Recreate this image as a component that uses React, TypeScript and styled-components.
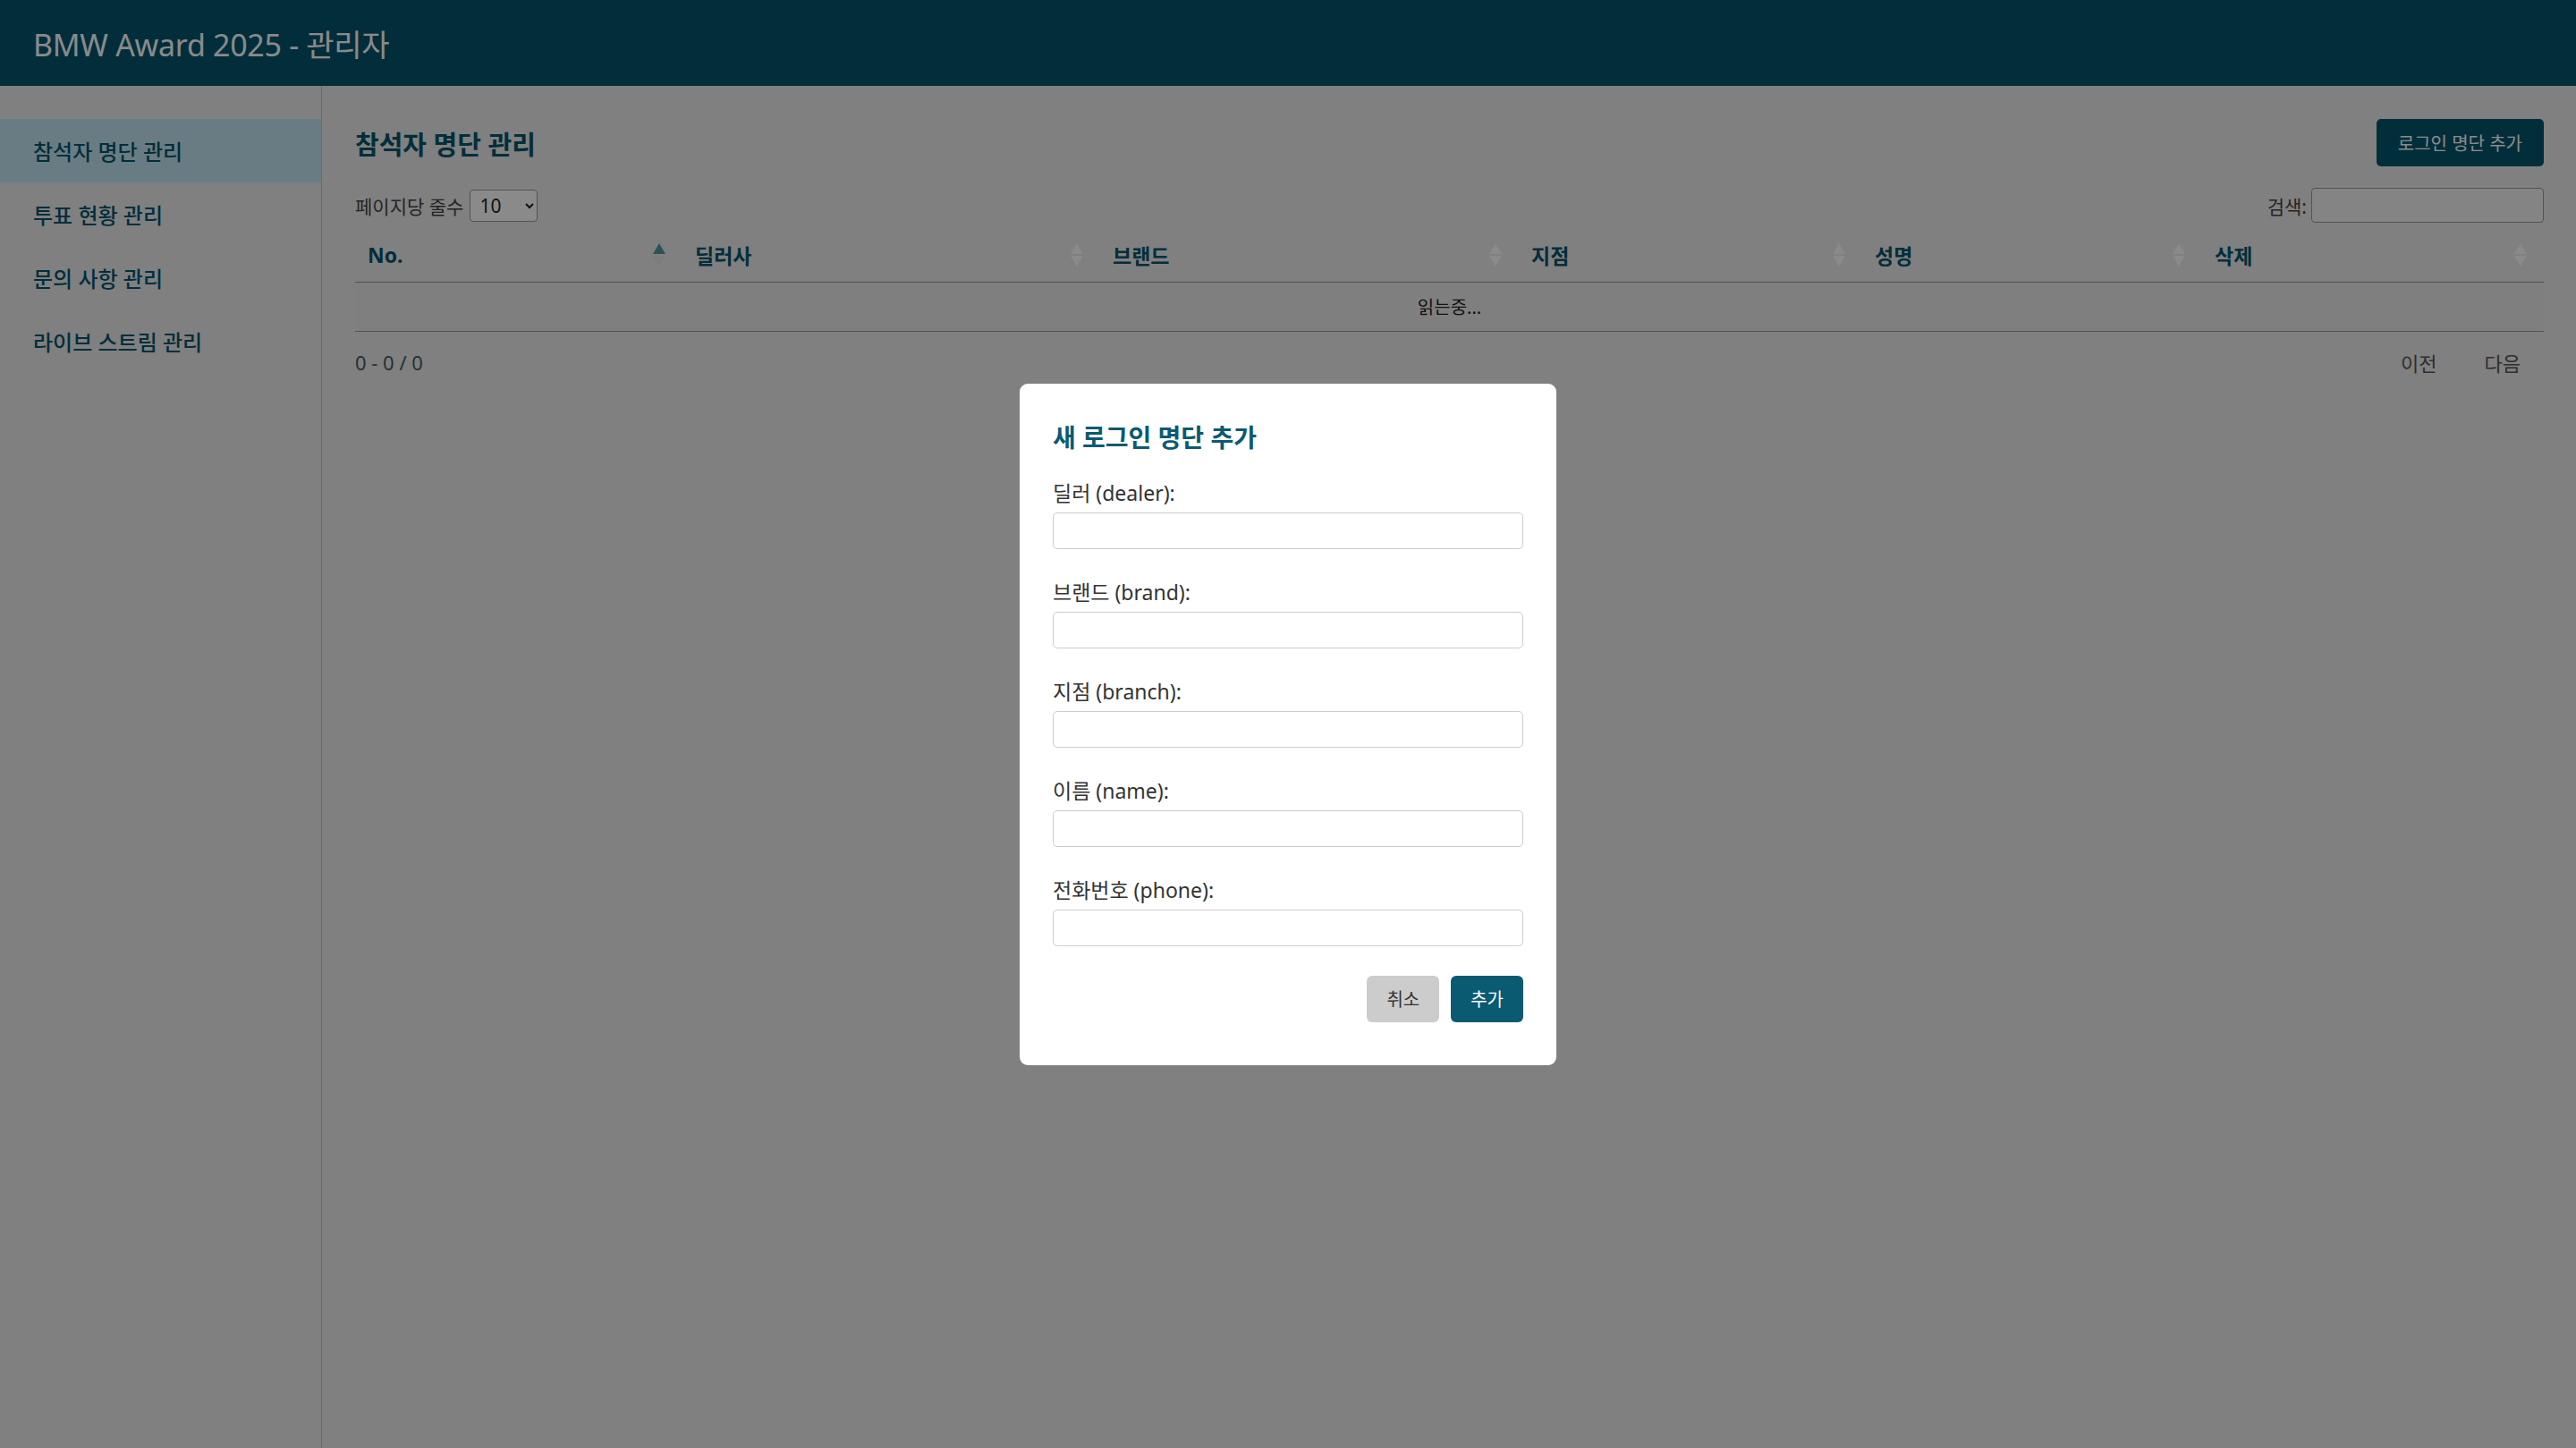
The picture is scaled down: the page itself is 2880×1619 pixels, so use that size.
import { FC } from "react";
import styled, { createGlobalStyle } from "styled-components";

const primary = "#04566e";

const GlobalStyle = createGlobalStyle`
  html, body {
    margin: 0;
    padding: 0;
  }
  body {
    font-family: "Noto Sans", "Noto Sans CJK KR", sans-serif;
    background: #ececec;
    color: #333;
  }
  * {
    box-sizing: border-box;
  }
`;

const Page = styled.div`
  min-height: 100vh;
  display: flex;
  flex-direction: column;
  background: #ececec;
`;

const TopBar = styled.header`
  height: 96px;
  flex-shrink: 0;
  background: ${primary};
  display: flex;
  align-items: center;
  padding: 0 37px;

  h1 {
    margin: 0;
    font-size: 34px;
    font-weight: 400;
    color: #fff;
    letter-spacing: -0.3px;
  }
`;

const Body = styled.div`
  flex: 1;
  display: flex;
`;

const Sidebar = styled.nav`
  width: 360px;
  flex-shrink: 0;
  border-right: 1px solid #c4c4c4;
  padding-top: 37px;
`;

const NavItem = styled.div<{ $active?: boolean }>`
  height: 71px;
  display: flex;
  align-items: center;
  padding: 0 37px;
  font-size: 24px;
  font-weight: 500;
  color: ${primary};
  background: ${(p) => (p.$active ? "#c4e6f2" : "transparent")};
`;

const Main = styled.main`
  flex: 1;
  padding: 37px 36px 0 37px;
`;

const TitleRow = styled.div`
  height: 53px;
  display: flex;
  justify-content: space-between;
  align-items: center;

  h2 {
    margin: 0;
    font-size: 29px;
    font-weight: 700;
    color: ${primary};
  }
`;

const PrimaryButton = styled.button`
  height: 53px;
  padding: 0 24px;
  border: none;
  border-radius: 5px;
  background: ${primary};
  color: #fff;
  font-family: inherit;
  font-size: 20px;
`;

const ControlsRow = styled.div`
  margin-top: 24px;
  height: 39px;
  display: flex;
  justify-content: space-between;
  align-items: center;
  font-size: 21px;
  color: #444;

  label {
    display: flex;
    align-items: center;
    gap: 7px;
  }
`;

const PageSelect = styled.select`
  width: 76px;
  height: 36px;
  font-family: inherit;
  font-size: 21px;
  color: #222;
  background: #fff;
  border: 1px solid #999;
  border-radius: 4px;
  padding: 0 6px;
`;

const SearchInput = styled.input`
  width: 260px;
  height: 39px;
  border: 1px solid #999;
  border-radius: 4px;
  background: #f4f4f4;
`;

const Table = styled.table`
  margin-top: 6px;
  width: 100%;
  border-collapse: collapse;
  table-layout: fixed;
`;

const Th = styled.th`
  height: 60px;
  padding: 0 19px 0 14px;
  border-bottom: 1px solid #9a9a9a;
  text-align: left;
  font-size: 23px;
  font-weight: 700;
  color: ${primary};

  div {
    display: flex;
    justify-content: space-between;
    align-items: center;
  }
`;

const LoadingCell = styled.td`
  height: 55px;
  text-align: center;
  font-size: 20px;
  color: #222;
  background: #eaeaea;
  border-bottom: 1px solid #9a9a9a;
`;

const Footer = styled.div`
  margin-top: 16px;
  height: 36px;
  display: flex;
  justify-content: space-between;
  align-items: center;
  font-size: 22px;
  color: #3f5d66;
`;

const Pager = styled.div`
  display: flex;
  gap: 1px;
`;

const PageLink = styled.span`
  padding: 0 26px;
  color: #555;
  font-size: 22px;
`;

const Overlay = styled.div`
  position: fixed;
  inset: 0;
  background: rgba(0, 0, 0, 0.46);
  display: flex;
  align-items: center;
  justify-content: center;
`;

const Modal = styled.div`
  width: 600px;
  background: #fff;
  border-radius: 9px;
  padding: 42px 37px 48px;

  h3 {
    margin: 0 0 29px;
    font-size: 28px;
    line-height: 36px;
    font-weight: 700;
    color: #0a5a72;
  }
`;

const Field = styled.div`
  margin-bottom: 33px;

  label {
    display: block;
    font-size: 23px;
    line-height: 30px;
    color: #333;
    margin-bottom: 7px;
  }

  input {
    display: block;
    width: 100%;
    height: 41px;
    border: 1px solid #ccc;
    border-radius: 5px;
    background: #fff;
  }
`;

const Actions = styled.div`
  display: flex;
  justify-content: flex-end;
  gap: 13px;
`;

const ModalButton = styled.button<{ $primary?: boolean }>`
  height: 52px;
  padding: 0 22px;
  border: none;
  border-radius: 6px;
  font-family: inherit;
  font-size: 20px;
  background: ${(p) => (p.$primary ? "#0a5a72" : "#cccccc")};
  color: ${(p) => (p.$primary ? "#fff" : "#333")};
`;

const SortIcon: FC<{ active?: boolean }> = ({ active }) => (
  <svg width="14" height="28" viewBox="0 0 14 28">
    <path d="M7 1 L14 13 H0 Z" fill={active ? "#4f9c9a" : "#ffffff"} />
    <path d="M0 15 H14 L7 27 Z" fill={active ? "#e2e8e8" : "#ffffff"} />
  </svg>
);

const columns = [
  { label: "No.", width: 366 },
  { label: "딜러사", width: 467 },
  { label: "브랜드", width: 468 },
  { label: "지점", width: 384 },
  { label: "성명", width: 380 },
  { label: "삭제", width: 382 },
];

const navItems = ["참석자 명단 관리", "투표 현황 관리", "문의 사항 관리", "라이브 스트림 관리"];

const fields = [
  "딜러 (dealer):",
  "브랜드 (brand):",
  "지점 (branch):",
  "이름 (name):",
  "전화번호 (phone):",
];

const App: FC = () => {
  return (
    <>
      <GlobalStyle />
      <Page>
        <TopBar>
          <h1>BMW Award 2025 - 관리자</h1>
        </TopBar>
        <Body>
          <Sidebar>
            {navItems.map((item, i) => (
              <NavItem key={item} $active={i === 0}>
                {item}
              </NavItem>
            ))}
          </Sidebar>
          <Main>
            <TitleRow>
              <h2>참석자 명단 관리</h2>
              <PrimaryButton>로그인 명단 추가</PrimaryButton>
            </TitleRow>
            <ControlsRow>
              <label>
                페이지당 줄수
                <PageSelect defaultValue="10">
                  <option value="10">10</option>
                  <option value="25">25</option>
                  <option value="50">50</option>
                </PageSelect>
              </label>
              <label style={{ gap: 5 }}>
                검색:
                <SearchInput type="search" />
              </label>
            </ControlsRow>
            <Table>
              <colgroup>
                {columns.map((c) => (
                  <col key={c.label} style={{ width: c.width }} />
                ))}
              </colgroup>
              <thead>
                <tr>
                  {columns.map((c, i) => (
                    <Th key={c.label}>
                      <div>
                        <span>{c.label}</span>
                        <SortIcon active={i === 0} />
                      </div>
                    </Th>
                  ))}
                </tr>
              </thead>
              <tbody>
                <tr>
                  <LoadingCell colSpan={6}>읽는중...</LoadingCell>
                </tr>
              </tbody>
            </Table>
            <Footer>
              <span>0 - 0 / 0</span>
              <Pager>
                <PageLink>이전</PageLink>
                <PageLink>다음</PageLink>
              </Pager>
            </Footer>
          </Main>
        </Body>
        <Overlay>
          <Modal>
            <h3>새 로그인 명단 추가</h3>
            {fields.map((f) => (
              <Field key={f}>
                <label>{f}</label>
                <input type="text" />
              </Field>
            ))}
            <Actions>
              <ModalButton>취소</ModalButton>
              <ModalButton $primary>추가</ModalButton>
            </Actions>
          </Modal>
        </Overlay>
      </Page>
    </>
  );
};

export default App;
